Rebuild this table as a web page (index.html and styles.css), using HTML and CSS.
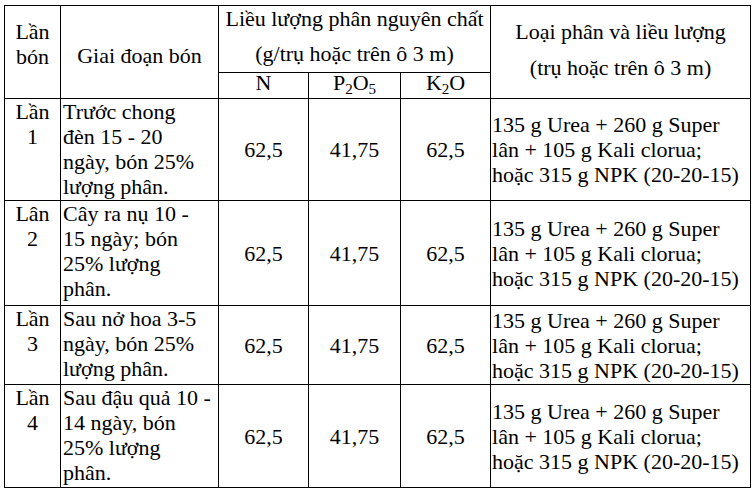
FILE: index.html
```html
<!DOCTYPE html>
<html lang="vi">
<head>
<meta charset="utf-8">
<title>Liều lượng phân bón</title>
<link rel="stylesheet" href="styles.css">
</head>
<body>
<table class="fert">
  <colgroup>
    <col class="c-lan">
    <col class="c-stage">
    <col class="c-n">
    <col class="c-p">
    <col class="c-k">
    <col class="c-type">
  </colgroup>
  <tr class="h1">
    <td rowspan="2" class="hd hd-lan"><div class="lan-txt">Lần<br>bón</div></td>
    <td rowspan="2" class="hd hd-stage"><div class="stage-txt">Giai đoạn bón</div></td>
    <td colspan="3" class="hd hd-dose"><div class="dose-1">Liều lượng phân nguyên chất</div><div class="dose-2">(g/trụ hoặc trên ô 3 m)</div></td>
    <td rowspan="2" class="hd hd-type"><div class="type-1">Loại phân và liều lượng</div><div class="type-2">(trụ hoặc trên ô 3 m)</div></td>
  </tr>
  <tr class="h2">
    <td class="hd-el">N</td>
    <td class="hd-el">P<sub>2</sub>O<sub>5</sub></td>
    <td class="hd-el">K<sub>2</sub>O</td>
  </tr>
  <tr class="r1">
    <td class="lan">Lần<br>1</td>
    <td class="stage">Trước chong<br>đèn 15 - 20<br>ngày, bón 25%<br>lượng phân.</td>
    <td class="num">62,5</td>
    <td class="num">41,75</td>
    <td class="num">62,5</td>
    <td class="type">135 g Urea + 260 g Super<br>lân + 105 g Kali clorua;<br>hoặc 315 g NPK (20-20-15)</td>
  </tr>
  <tr class="r2">
    <td class="lan">Lân<br>2</td>
    <td class="stage">Cây ra nụ 10 -<br>15 ngày; bón<br>25% lượng<br>phân.</td>
    <td class="num">62,5</td>
    <td class="num">41,75</td>
    <td class="num">62,5</td>
    <td class="type">135 g Urea + 260 g Super<br>lân + 105 g Kali clorua;<br>hoặc 315 g NPK (20-20-15)</td>
  </tr>
  <tr class="r3">
    <td class="lan">Lần<br>3</td>
    <td class="stage">Sau nở hoa 3-5<br>ngày, bón 25%<br>lượng phân.</td>
    <td class="num">62,5</td>
    <td class="num">41,75</td>
    <td class="num">62,5</td>
    <td class="type">135 g Urea + 260 g Super<br>lân + 105 g Kali clorua;<br>hoặc 315 g NPK (20-20-15)</td>
  </tr>
  <tr class="r4">
    <td class="lan">Lần<br>4</td>
    <td class="stage">Sau đậu quả 10 -<br>14 ngày, bón<br>25% lượng<br>phân.</td>
    <td class="num">62,5</td>
    <td class="num">41,75</td>
    <td class="num">62,5</td>
    <td class="type">135 g Urea + 260 g Super<br>lân + 105 g Kali clorua;<br>hoặc 315 g NPK (20-20-15)</td>
  </tr>
</table>
</body>
</html>
```

FILE: styles.css
```css
html, body {
  margin: 0;
  padding: 0;
  background: #ffffff;
}

body {
  padding: 5px 0 0 4px;
  font-family: "Liberation Serif", "Times New Roman", serif;
  font-size: 22px;
  line-height: 25px;
  color: #000000;
}

.fert {
  border-collapse: collapse;
  table-layout: fixed;
  width: 747px;
}

.c-lan { width: 56px; }
.c-stage { width: 158px; }
.c-n { width: 90px; }
.c-p { width: 92px; }
.c-k { width: 90px; }
.c-type { width: 260px; }

.fert td {
  border: 1px solid #000000;
  padding: 0;
  vertical-align: top;
  white-space: nowrap;
}

.h1 { height: 67px; }
.h2 { height: 26px; }
.r1 { height: 102px; }
.r2 { height: 105px; }
.r3 { height: 79px; }
.r4 { height: 103px; }

.hd { text-align: center; }

.lan-txt { margin-top: 13px; }
.stage-txt { margin-top: 37px; }

.dose-1 { margin-top: 0; }
.dose-2 { margin-top: 10px; }

.type-1 { margin-top: 13px; }
.type-2 { margin-top: 11px; }

.hd-el {
  text-align: center;
  line-height: 20px;
}

sub {
  font-size: 15px;
  line-height: 0;
  vertical-align: -4px;
}

.lan {
  text-align: center;
}

.stage {
  text-align: left;
  padding-left: 2px !important;
}

.num {
  text-align: center;
  vertical-align: middle !important;
}

.type {
  text-align: left;
  padding-left: 1px !important;
  vertical-align: middle !important;
}
```
